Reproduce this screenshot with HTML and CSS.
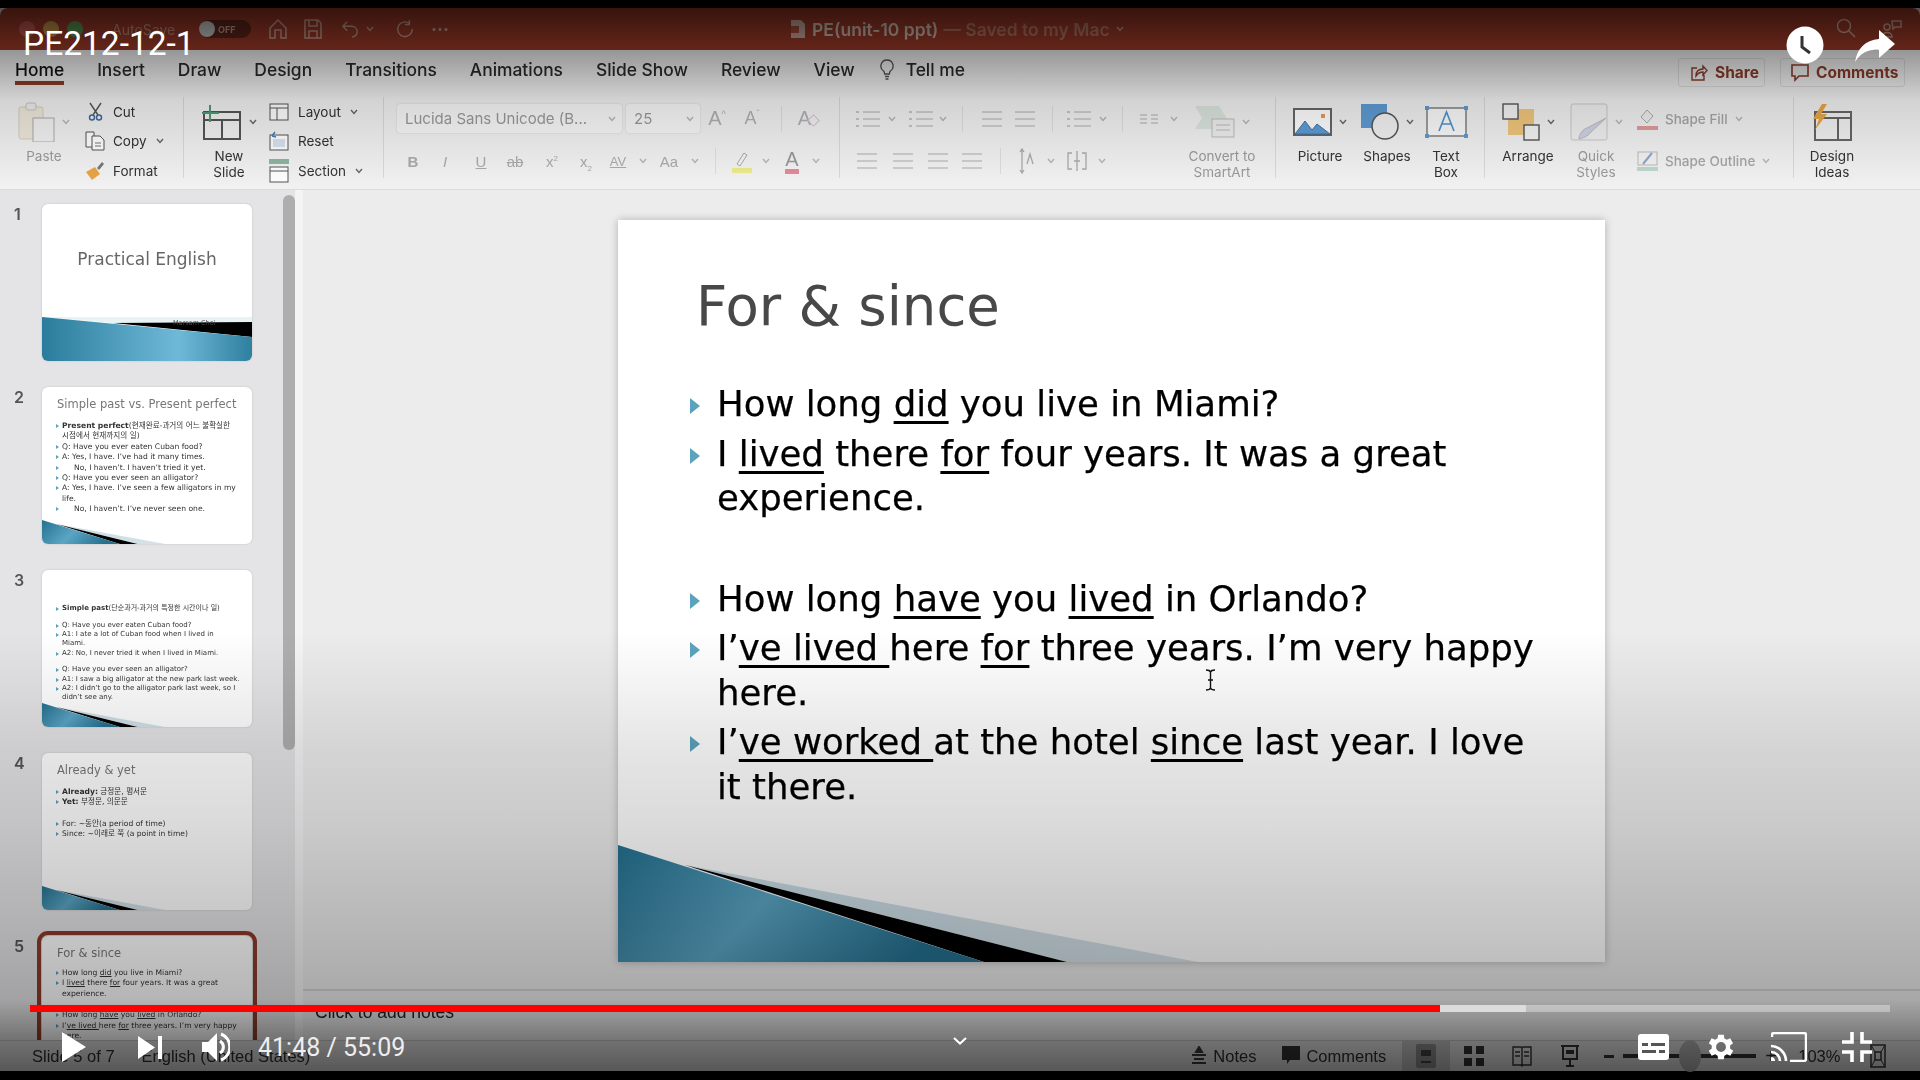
FILE: index.html
```html
<!DOCTYPE html>
<html lang="en">
<head>
<meta charset="UTF-8">
<title>PE212-12-1</title>
<link rel="stylesheet" href="styles.css">
</head>
<body>

<svg class="defs" width="0" height="0">
  <defs>
    <linearGradient id="blue" x1="0" y1="0" x2="1" y2="0.3">
      <stop offset="0" stop-color="#24708f"/>
      <stop offset="0.5" stop-color="#5ba5c4"/>
      <stop offset="1" stop-color="#24708f"/>
    </linearGradient>
    <linearGradient id="blueWide" x1="0" y1="0" x2="1" y2="0">
      <stop offset="0" stop-color="#2b7c9c"/>
      <stop offset="0.65" stop-color="#6fb9d8"/>
      <stop offset="1" stop-color="#2f7f9f"/>
    </linearGradient>
    <linearGradient id="fade" x1="0" y1="0" x2="1" y2="0">
      <stop offset="0" stop-color="#c6dbe6"/>
      <stop offset="1" stop-color="#d6e2e8"/>
    </linearGradient>
    <symbol id="wave" viewBox="0 0 987 117" preserveAspectRatio="none">
      <polygon points="67,20 580,117 449,117" fill="url(#fade)"/>
      <polygon points="67,20 449,117 366,117" fill="#000"/>
      <polygon points="0,0 366,117 0,117" fill="url(#blue)"/>
    </symbol>
    <symbol id="chev" viewBox="0 0 8 6">
      <path d="M1 1l3 3.4L7 1" fill="none" stroke="currentColor" stroke-width="1.4"/>
    </symbol>
    <symbol id="lines" viewBox="0 0 20 18">
      <path d="M0 2h20M0 9h20M0 16h20" fill="none" stroke="currentColor" stroke-width="1.6"/>
    </symbol>
    <symbol id="listing" viewBox="0 0 24 18">
      <path d="M7 2h17M7 9h17M7 16h17" fill="none" stroke="currentColor" stroke-width="1.6"/>
      <path d="M0 1h3v2H0zM0 8h3v2H0zM0 15h3v2H0z" fill="currentColor"/>
    </symbol>
  </defs>
</svg>

<div class="app">
  <header class="titlebar">
    <span class="light light-red"></span>
    <span class="light light-yellow"></span>
    <span class="light light-green"></span>
    <span class="autosave">AutoSave</span>
    <span class="toggle"><i></i><b>OFF</b></span>
    <svg class="tb-icon tb-home" viewBox="0 0 20 22"><path d="M2 10l8-8 8 8v10h-5v-8H7v8H2z"/></svg>
    <svg class="tb-icon tb-save" viewBox="0 0 20 22"><path d="M2 2h13l3 3v15H2zM6 2v6h8V2M6 20v-7h8v7"/></svg>
    <svg class="tb-icon tb-undo" viewBox="0 0 22 22"><path d="M3 8h10a6 6 0 0 1 0 12M3 8l5-5M3 8l5 5"/></svg>
    <svg class="tb-chev"><use href="#chev"/></svg>
    <svg class="tb-icon tb-redo" viewBox="0 0 22 22"><path d="M17 5a8 8 0 1 0 3 6M17 1v5h-5"/></svg>
    <span class="tb-dots">···</span>
    <svg class="tb-doc" viewBox="0 0 14 18"><path d="M0 0h10l4 4v14H0z" fill="#d8b4a6"/><rect x="0" y="6" width="8" height="7" fill="#b5523a"/></svg>
    <span class="doc-name">PE(unit-10 ppt)</span>
    <span class="doc-saved">— Saved to my Mac</span>
    <svg class="tb-chev"><use href="#chev"/></svg>
    <svg class="tb-icon tb-search" viewBox="0 0 20 20"><circle cx="8" cy="8" r="6.5"/><path d="M13 13l6 6"/></svg>
    <svg class="tb-icon tb-people" viewBox="0 0 24 20"><circle cx="7" cy="8" r="3"/><path d="M2 18c0-6 10-6 10 0zM12 2h9v6h-6l-2 2z"/></svg>
  </header>

  <nav class="tabs">
    <span class="tab active">Home</span>
    <span class="tab">Insert</span>
    <span class="tab">Draw</span>
    <span class="tab">Design</span>
    <span class="tab">Transitions</span>
    <span class="tab">Animations</span>
    <span class="tab">Slide Show</span>
    <span class="tab">Review</span>
    <span class="tab">View</span>
    <svg class="bulb" viewBox="0 0 14 22"><path d="M7 1a6 6 0 0 0-3.400 11c.8.7.9 1.500 1 3h4.800c.1-1.500.2-2.300 1-3A6 6 0 0 0 7 1zM5 17.500h4M5.500 20h3" fill="none" stroke="#555" stroke-width="1.300"/></svg>
    <span class="tab tell">Tell me</span>
    <span class="top-btn share">
      <svg viewBox="0 0 18 18"><path d="M7 4H2v12h12v-5M6 12c0-5 3-7 7-7V2l4 4.500L13 11V8c-3 0-5 1-7 4z" fill="none" stroke="#8c3b2a" stroke-width="1.400"/></svg>
      Share
    </span>
    <span class="top-btn comments">
      <svg viewBox="0 0 18 18"><path d="M1 1h16v11H8l-4 4v-4H1z" fill="none" stroke="#8c3b2a" stroke-width="1.600"/></svg>
      Comments
    </span>
  </nav>

  <section class="ribbon">
    <div class="group g-clip">
      <div class="big paste muted">
        <div class="big-icon">
          <svg class="ic-paste" viewBox="0 0 37 40"><rect x="1" y="5" width="24" height="32" rx="2" fill="#efe9dc" stroke="#d7cfbd"/><rect x="8" y="1" width="10" height="7" rx="2" fill="#eee" stroke="#c9c4b8"/><rect x="15" y="16" width="21" height="24" fill="#f2f2f2" stroke="#aaa"/></svg>
          <svg class="chev"><use href="#chev"/></svg>
        </div>
        <span>Paste</span>
      </div>
      <div class="tools">
        <div class="tool">
          <span class="tool-ic"><svg width="15" height="19" viewBox="0 0 15 19"><path d="M2 1l8 12M13 1L5 13" fill="none" stroke="#555" stroke-width="1.400"/><circle cx="4" cy="15.500" r="2.500" fill="none" stroke="#3e6d9c" stroke-width="1.500"/><circle cx="11" cy="15.500" r="2.500" fill="none" stroke="#3e6d9c" stroke-width="1.500"/></svg></span>
          Cut
        </div>
        <div class="tool">
          <span class="tool-ic"><svg width="21" height="20" viewBox="0 0 21 20"><path d="M1 1h8v15H1z" fill="#fff" stroke="#555"/><path d="M7 5h8l4 4v10H7z" fill="#fff" stroke="#555"/><path d="M10 12h6M10 15h6" stroke="#777"/></svg></span>
          Copy <svg class="chev chev-gap"><use href="#chev"/></svg>
        </div>
        <div class="tool">
          <span class="tool-ic"><svg width="20" height="20" viewBox="0 0 20 20"><path d="M1 11l9-5 5 7-8 6z" fill="#eaa545"/><path d="M12 7l5-6 2 2-5 6z" fill="#777"/></svg></span>
          Format
        </div>
      </div>
    </div>

    <div class="group g-slides">
      <div class="big new-slide">
        <div class="big-icon">
          <svg class="ic-new" viewBox="0 0 40 36"><rect x="2" y="8" width="36" height="27" fill="#f3f3f3" stroke="#555" stroke-width="2"/><path d="M2 16h36M20 16v19" stroke="#555" stroke-width="2"/><path d="M8 1v17M0 9h17" stroke="#4f9a78" stroke-width="2"/></svg>
          <svg class="chev"><use href="#chev"/></svg>
        </div>
        <span>New</span>
        <span>Slide</span>
      </div>
      <div class="tools tools-wide">
        <div class="tool">
          <span class="tool-ic"><svg width="20" height="18" viewBox="0 0 20 18"><rect x="1" y="1" width="18" height="16" fill="#fff" stroke="#555"/><path d="M1 5h18M8 5v12" stroke="#555"/></svg></span>
          Layout <svg class="chev chev-gap"><use href="#chev"/></svg>
        </div>
        <div class="tool">
          <span class="tool-ic"><svg width="20" height="20" viewBox="0 0 20 20"><rect x="1" y="4" width="18" height="15" fill="#fff" stroke="#555"/><path d="M4 8h12v8H4z" fill="#d7e3ee"/><path d="M3 5l3-4M3 5l4 1" stroke="#3e7fb8" stroke-width="1.500" fill="none"/></svg></span>
          Reset
        </div>
        <div class="tool">
          <span class="tool-ic"><svg width="20" height="24" viewBox="0 0 20 24"><rect x="0" y="0" width="20" height="5" fill="#8fb59f"/><rect x="1" y="8" width="18" height="15" fill="#fff" stroke="#555"/><path d="M1 12h18" stroke="#555"/></svg></span>
          Section <svg class="chev chev-gap"><use href="#chev"/></svg>
        </div>
      </div>
    </div>

    <div class="group g-font">
      <div class="font-row1">
        <span class="field field-name">Lucida Sans Unicode (B... <svg class="chev"><use href="#chev"/></svg></span>
        <span class="field field-size">25 <svg class="chev"><use href="#chev"/></svg></span>
        <div class="cells cells-font1 muted-ic">
          <span class="glyph">A<sup>^</sup></span>
          <span class="glyph glyph-sm">A<sup>ˇ</sup></span>
          <span class="vsep"></span>
          <span class="glyph">A<i class="eraser"></i></span>
        </div>
      </div>
      <div class="cells cells-font2 muted-ic">
        <span class="fmt bold">B</span>
        <span class="fmt ital">I</span>
        <span class="fmt under">U</span>
        <span class="fmt strike">ab</span>
        <span class="fmt">x<sup>2</sup></span>
        <span class="fmt">x<sub>2</sub></span>
        <span class="fmt fmt-sm">AV</span>
        <svg class="chev"><use href="#chev"/></svg>
        <span class="fmt">Aa</span>
        <svg class="chev"><use href="#chev"/></svg>
        <span class="vsep"></span>
        <svg width="20" height="24" viewBox="0 0 20 24"><path d="M5 15l7-11 3 2-7 11z" fill="none" stroke="#aaa"/><rect x="0" y="19" width="20" height="5" fill="#ecec8c"/></svg>
        <svg class="chev"><use href="#chev"/></svg>
        <span class="fmt font-a">A</span>
        <svg class="chev"><use href="#chev"/></svg>
      </div>
    </div>

    <div class="group g-para">
      <div class="para-rows">
        <div class="cells cells-para1 muted-ic">
          <span></span>
          <svg width="24" height="18"><use href="#listing"/></svg>
          <svg class="chev"><use href="#chev"/></svg>
          <svg width="24" height="18"><use href="#listing"/></svg>
          <svg class="chev"><use href="#chev"/></svg>
          <span class="vsep"></span>
          <svg width="20" height="18"><use href="#lines"/></svg>
          <svg width="20" height="18"><use href="#lines"/></svg>
          <span class="vsep"></span>
          <svg width="24" height="18"><use href="#listing"/></svg>
          <svg class="chev"><use href="#chev"/></svg>
          <span class="vsep"></span>
          <svg class="ic-cols" viewBox="0 0 18 12"><path d="M0 2h7M0 6h7M0 10h7M11 2h7M11 6h7M11 10h7" stroke="#c4c4c4" stroke-width="1.400"/></svg>
          <svg class="chev"><use href="#chev"/></svg>
        </div>
        <div class="cells cells-para2 muted-ic">
          <svg width="20" height="18"><use href="#lines"/></svg>
          <svg width="20" height="18"><use href="#lines"/></svg>
          <svg width="20" height="18"><use href="#lines"/></svg>
          <svg width="20" height="18"><use href="#lines"/></svg>
          <span class="vsep"></span>
          <svg width="16" height="26" viewBox="0 0 16 26"><path d="M3 1v24M1 4l2-3 2 3M1 22l2 3 2-3M8 16l3-10 3 10" fill="none" stroke="#aaa" stroke-width="1.300"/></svg>
          <svg class="chev"><use href="#chev"/></svg>
          <svg width="20" height="22" viewBox="0 0 20 22"><path d="M5 3H1v16h4M15 3h4v16h-4M10 1v20M7 11h6" fill="none" stroke="#aaa" stroke-width="1.300"/></svg>
          <svg class="chev"><use href="#chev"/></svg>
        </div>
      </div>
      <div class="big smartart muted">
        <div class="big-icon">
          <svg class="ic-smart" viewBox="0 0 40 32"><path d="M0 0h24l9 14-9 9H0l7-11z" fill="#dbe5dd"/><rect x="17" y="13" width="22" height="18" fill="#eee" stroke="#bbb"/><path d="M21 19h14M21 24h14" stroke="#bbb"/></svg>
          <svg class="chev"><use href="#chev"/></svg>
        </div>
        <span>Convert to</span>
        <span>SmartArt</span>
      </div>
    </div>

    <div class="group g-insert">
      <div class="big w-picture">
        <div class="big-icon">
          <svg class="ic-pic" viewBox="0 0 39 28"><rect x="1" y="1" width="37" height="26" fill="#fff" stroke="#666" stroke-width="2"/><path d="M2 26l10-13 7 9 5-6 13 10z" fill="#5f9bd3" stroke="#3c76ab"/><rect x="28" y="6" width="4" height="4" fill="#e79a5a"/></svg>
          <svg class="chev"><use href="#chev"/></svg>
        </div>
        <span>Picture</span>
      </div>
      <div class="big w-shapes">
        <div class="big-icon">
          <svg class="ic-shapes" viewBox="0 0 38 36"><rect x="0" y="0" width="26" height="24" fill="#5f9bd3"/><circle cx="24" cy="22" r="13" fill="#f2f2f2" stroke="#555" stroke-width="1.500"/></svg>
          <svg class="chev"><use href="#chev"/></svg>
        </div>
        <span>Shapes</span>
      </div>
      <div class="big w-textbox">
        <div class="big-icon">
          <svg class="ic-box" viewBox="0 0 43 32"><rect x="2" y="2" width="39" height="28" fill="#fafafa" stroke="#777" stroke-width="1.400"/><path d="M14 25l7.500-19L29 25M17 18h9" fill="none" stroke="#4e92cf" stroke-width="1.600"/><g fill="#5f9bd3"><rect width="4" height="4"/><rect x="39" width="4" height="4"/><rect y="28" width="4" height="4"/><rect x="39" y="28" width="4" height="4"/></g></svg>
        </div>
        <span>Text</span>
        <span>Box</span>
      </div>
    </div>

    <div class="group g-draw">
      <div class="big w-arrange">
        <div class="big-icon">
          <svg class="ic-arr" viewBox="0 0 38 38"><rect x="6" y="6" width="26" height="26" fill="#f0c77c"/><rect x="1" y="1" width="15" height="15" fill="#f4f4f4" stroke="#555" stroke-width="1.400"/><rect x="22" y="22" width="15" height="15" fill="#f4f4f4" stroke="#555" stroke-width="1.400"/></svg>
          <svg class="chev"><use href="#chev"/></svg>
        </div>
        <span>Arrange</span>
      </div>
      <div class="big w-quick muted">
        <div class="big-icon">
          <svg class="ic-arr" viewBox="0 0 38 38"><rect x="1" y="1" width="36" height="36" rx="2" fill="#f0f0f0" stroke="#c9c9c9"/><path d="M36 15L20 30c-2 3-6 5-11 6 0-5 4-10 8-11z" fill="#cfd3e6" stroke="#bbb"/></svg>
          <svg class="chev"><use href="#chev"/></svg>
        </div>
        <span>Quick</span>
        <span>Styles</span>
      </div>
      <div class="shape-tools">
        <div class="shape-tool">
          <svg width="21" height="22" viewBox="0 0 21 22"><path d="M4 9l6-7 6 6-6 7z" fill="#eee" stroke="#aaa"/><rect y="18" width="21" height="4" fill="#e39a9a"/></svg>
          <span>Shape Fill</span>
          <svg class="chev"><use href="#chev"/></svg>
        </div>
        <div class="shape-tool">
          <svg width="21" height="20" viewBox="0 0 21 20"><rect x="1" y="1" width="19" height="13" fill="#f2f2f2" stroke="#bbb"/><path d="M6 13l9-11" stroke="#8fa5c9" stroke-width="2"/><rect y="16" width="21" height="4" fill="#bcd8d0"/></svg>
          <span>Shape Outline</span>
          <svg class="chev"><use href="#chev"/></svg>
        </div>
      </div>
    </div>

    <div class="group g-design">
      <div class="big w-design">
        <div class="big-icon">
          <svg class="ic-design" viewBox="0 0 40 37"><rect x="3" y="8" width="36" height="28" fill="#f2f2f2" stroke="#666" stroke-width="2"/><path d="M3 14h36M26 14v22" stroke="#666" stroke-width="2"/><path d="M10 0L1 15h6L3 26l12-16H9l6-10z" fill="#eaa545"/></svg>
        </div>
        <span>Design</span>
        <span>Ideas</span>
      </div>
    </div>
  </section>

  <div class="workspace">
    <aside class="sidebar">
      <div class="thumb-row">
        <span class="num">1</span>
        <div class="thumb thumb-first">
          <h4 class="first-title">Practical English</h4>
          <span class="first-name">Marsam Choi</span>
          <svg class="first-wave" viewBox="0 0 210 44" preserveAspectRatio="none">
            <polygon points="0,0 71,6 210,5 210,-3 0,-3" fill="#e9f2f5"/>
            <polygon points="71,6 210,5 210,20" fill="#000"/>
            <polygon points="0,0 210,20 210,44 0,44" fill="url(#blueWide)"/>
          </svg>
        </div>
      </div>
      <div class="thumb-row">
        <span class="num">2</span>
        <div class="thumb">
          <h4 class="t-title t-title-sm">Simple past vs. Present perfect</h4>
          <ul class="t-list">
            <li><b>Present perfect</b>(현재완료-과거의 어느 불확실한<br>시점에서 현재까지의 일)</li>
            <li>Q: Have you ever eaten Cuban food?</li>
            <li>A: Yes, I have. I’ve had it many times.</li>
            <li class="indent">No, I haven’t. I haven’t tried it yet.</li>
            <li>Q: Have you ever seen an alligator?</li>
            <li>A: Yes, I have. I’ve seen a few alligators in my life.</li>
            <li class="indent">No, I haven’t. I’ve never seen one.</li>
          </ul>
          <svg class="t-wave"><use href="#wave"/></svg>
        </div>
      </div>
      <div class="thumb-row">
        <span class="num">3</span>
        <div class="thumb">
          <ul class="t-list t-list-3">
            <li class="gap-after"><b>Simple past</b>(단순과거-과거의 특정한 시간이나 일)</li>
            <li>Q: Have you ever eaten Cuban food?</li>
            <li>A1: I ate a lot of Cuban food when I lived in<br>Miami.</li>
            <li class="gap-after">A2: No, I never tried it when I lived in Miami.</li>
            <li>Q: Have you ever seen an alligator?</li>
            <li>A1: I saw a big alligator at the new park last week.</li>
            <li>A2: I didn’t go to the alligator park last week, so I didn’t see any.</li>
          </ul>
          <svg class="t-wave"><use href="#wave"/></svg>
        </div>
      </div>
      <div class="thumb-row">
        <span class="num">4</span>
        <div class="thumb">
          <h4 class="t-title">Already &amp; yet</h4>
          <ul class="t-list">
            <li><b>Already:</b> 긍정문, 평서문</li>
            <li class="gap-after-lg"><b>Yet:</b> 부정문, 의문문</li>
            <li>For: ~동안(a period of time)</li>
            <li>Since: ~이래로 쭉 (a point in time)</li>
          </ul>
          <svg class="t-wave"><use href="#wave"/></svg>
        </div>
      </div>
      <div class="thumb-row">
        <span class="num">5</span>
        <div class="thumb selected">
          <h4 class="t-title">For &amp; since</h4>
          <ul class="t-list">
            <li>How long <u>did</u> you live in Miami?</li>
            <li class="gap-after-lg">I <u>lived</u> there <u>for</u> four years. It was a great experience.</li>
            <li>How long <u>have</u> you <u>lived</u> in Orlando?</li>
            <li>I’<u>ve lived </u>here <u>for</u> three years. I’m very happy here.</li>
          </ul>
        </div>
      </div>
      <div class="scrollbar"></div>
    </aside>
    <div class="gutter"></div>
    <main class="main">
      <div class="canvas">
        <article class="slide">
          <h1 class="slide-title">For &amp; since</h1>
          <ul class="slide-list">
            <li>How long <u>did</u> you live in Miami?</li>
            <li>I <u>lived</u> there <u>for</u> four years. It was a great experience.</li>
            <li class="blank"></li>
            <li>How long <u>have</u> you <u>lived</u> in Orlando?</li>
            <li>I’<u>ve lived </u>here <u>for</u> three years. I’m very happy here.</li>
            <li>I’<u>ve worked </u>at the hotel <u>since</u> last year. I love it there.</li>
          </ul>
          <svg class="slide-wave"><use href="#wave"/></svg>
        </article>
      </div>
      <div class="notes">Click to add notes</div>
    </main>
  </div>

  <footer class="status">
    <span class="st-slide">Slide 5 of 7</span>
    <span class="st-lang">English (United States)</span>
    <span class="st-item st-notes">
      <svg width="16" height="20" viewBox="0 0 16 20"><path d="M8 1l3 5H5zM1 9h14M3 13h10M1 17h14" stroke="#3a3a3a" stroke-width="2" fill="#3a3a3a"/></svg>
      Notes
    </span>
    <span class="st-item st-comments">
      <svg width="18" height="20" viewBox="0 0 18 20"><path d="M0 0h18v14H8l-3 4v-4H0z" fill="#333"/></svg>
      Comments
    </span>
    <span class="view-btn view-on"><svg width="20" height="24" viewBox="0 0 20 24"><rect width="20" height="24" rx="2" fill="#8e8e8e"/><rect x="5" y="6" width="10" height="6" fill="#444"/><rect x="5" y="17" width="10" height="2" fill="#444"/></svg></span>
    <span class="view-btn"><svg width="20" height="20" viewBox="0 0 20 20" fill="#333"><rect width="8" height="8"/><rect x="12" width="8" height="8"/><rect y="12" width="8" height="8"/><rect x="12" y="12" width="8" height="8"/></svg></span>
    <span class="view-btn"><svg width="20" height="22" viewBox="0 0 20 22"><path d="M1 2h8l1 1 1-1h8v18h-8l-1 1-1-1H1zM10 3v17M3 7h5M3 11h5M12 7h5M12 11h5" fill="none" stroke="#333" stroke-width="1.400"/></svg></span>
    <span class="view-btn"><svg width="18" height="22" viewBox="0 0 18 22"><path d="M0 1h18M2 1v13h14V1M9 14v6M5 21h8" fill="none" stroke="#333" stroke-width="2"/><rect x="5" y="5" width="8" height="4" fill="#333"/></svg></span>
    <span class="zoom-minus"></span>
    <span class="zoom-track"><i></i></span>
    <span class="zoom-plus">+</span>
    <span class="zoom-pct">103%</span>
    <svg class="fit" width="16" height="24" viewBox="0 0 16 24"><path d="M1 1h14v22H1zM5 8h6v8H5z" fill="none" stroke="#333" stroke-width="1.500"/><path d="M1 1l4 7M15 1l-4 7M1 23l4-7M15 23l-4-7" stroke="#333"/></svg>
  </footer>
</div>

<svg class="cursor" width="11" height="22" viewBox="0 0 11 22"><path d="M1 1c2 0 4 .5 4.500 2v16c-.5 1.500-2.500 2-4.500 2M10 1C8 1 6 1.500 5.500 3v16c.5 1.500 2.500 2 4.500 2M3 11h5" fill="none" stroke="#111" stroke-width="1.400"/></svg>

<div class="shade shade-top"></div>
<div class="shade shade-bottom"></div>

<div class="yt-top">
  <span class="yt-title">PE212-12-1</span>
  <span class="yt-clock">
    <svg viewBox="0 0 38 38"><circle cx="19" cy="19" r="18.500" fill="#fff"/><path d="M16 10v11l8 6" fill="none" stroke="#333" stroke-width="3"/></svg>
  </span>
  <svg class="yt-share" viewBox="0 0 40 32"><path d="M24 0l16 14-16 14v-8C13 19 6 23 0 32c2-13 10-22 24-23z" fill="#fff"/></svg>
</div>

<div class="yt-bottom">
  <div class="yt-progress">
    <span class="bar-played"></span>
    <span class="bar-buffer"></span>
    <span class="bar-rest"></span>
  </div>
  <div class="yt-controls">
    <svg class="yt-play" viewBox="0 0 24 30"><path d="M0 0l24 15L0 30z" fill="#fff"/></svg>
    <svg class="yt-next" viewBox="0 0 24 23"><path d="M0 0l17 11.500L0 23zM20 0h4v23h-4z" fill="#fff"/></svg>
    <svg class="yt-vol" viewBox="0 0 28 30"><path d="M0 10h6l9-9v28l-9-9H0z" fill="#fff"/><path d="M18 9a7 7 0 0 1 0 12" fill="none" stroke="#fff" stroke-width="3"/><path d="M19 2a14 14 0 0 1 0 26" fill="none" stroke="#fff" stroke-width="3"/></svg>
    <span class="yt-time">41:48 / 55:09</span>
    <svg class="yt-chev" viewBox="0 0 14 8"><path d="M1 1l6 5.500L13 1" fill="none" stroke="#fff" stroke-width="2.200"/></svg>
    <svg class="yt-cc" viewBox="0 0 31 26"><rect width="31" height="26" rx="3" fill="#fff"/><path d="M4 9h6v3H4zM13 9h14v3H13zM4 16h14v3H4zM21 16h6v3h-6z" fill="#555"/></svg>
    <svg class="yt-gear" viewBox="0 0 24 24"><path d="M19.400 13a7.500 7.500 0 0 0 0-2l2.100-1.600-2-3.500-2.500 1a7.500 7.500 0 0 0-1.700-1L15 3.300h-4l-.4 2.600a7.500 7.500 0 0 0-1.700 1l-2.500-1-2 3.500L6.500 11a7.500 7.500 0 0 0 0 2l-2.100 1.600 2 3.500 2.500-1a7.500 7.500 0 0 0 1.700 1l.4 2.600h4l.4-2.600a7.500 7.500 0 0 0 1.700-1l2.500 1 2-3.500zM13 15.500a3.500 3.500 0 1 1 0-7 3.500 3.500 0 0 1 0 7z" fill="#fff" fill-rule="evenodd" transform="translate(-1 0)"/></svg>
    <svg class="yt-cast" viewBox="0 0 36 30"><path d="M1 5V3a2 2 0 0 1 2-2h30a2 2 0 0 1 2 2v24a2 2 0 0 1-2 2H19" fill="none" stroke="#fff" stroke-width="2.400"/><path d="M0 14c8 0 15 7 15 15M0 20c5 0 9 4 9 9" fill="none" stroke="#fff" stroke-width="2.600"/><path d="M0 25a4 4 0 0 1 4 4H0z" fill="#fff"/></svg>
    <svg class="yt-exit" viewBox="0 0 30 30"><path d="M10 0v10H0M20 0v10h10M10 30V20H0M20 30V20h10" fill="none" stroke="#fff" stroke-width="3.600"/></svg>
  </div>
</div>

</body>
</html>
```

FILE: styles.css
```css
* {
  box-sizing: border-box;
}
html, body {
  margin: 0;
  padding: 0;
  height: 100%;
}
body {
  background-color: #000;
  overflow: hidden;
  position: relative;
  padding-top: 8px;
  font-family: Inter, "Liberation Sans", sans-serif;
  color: #333;
}
.defs {
  position: absolute;
}
.app {
  height: 1063px;
  display: flex;
  flex-direction: column;
  background-color: #ececec;
  filter: blur(0.55px);
}

/* title bar */
.titlebar {
  height: 42px;
  flex: none;
  display: flex;
  align-items: center;
  background-color: #a33c29;
  border-radius: 8px 8px 0 0;
  color: #d9b5a8;
  padding-top: 0;
}
.light {
  width: 16px;
  height: 16px;
  border-radius: 50%;
  margin-right: 8px;
  background-color: #c65a50;
}
.light-red {
  margin-left: 19px;
}
.light-yellow {
  background-color: #c9984a;
}
.light-green {
  background-color: #5f9b52;
}
.autosave {
  margin-left: 21px;
  font-size: 14px;
  color: #c98f7e;
  width: 87px;
}
.toggle {
  width: 52px;
  height: 18px;
  border-radius: 9px;
  background-color: #64261a;
  display: flex;
  align-items: center;
  gap: 3px;
}
.toggle i {
  width: 16px;
  height: 16px;
  border-radius: 50%;
  background-color: #d6d6d6;
}
.toggle b {
  font-size: 9px;
  color: #c9a193;
}
.tb-icon {
  width: 20px;
  height: 22px;
  fill: none;
  stroke: #d3a799;
  stroke-width: 1.500;
}
.tb-home {
  margin-left: 17px;
}
.tb-save {
  margin-left: 15px;
}
.tb-undo {
  margin-left: 17px;
}
.tb-chev {
  width: 8px;
  height: 6px;
  margin-left: 6px;
  color: #c9a193;
}
.tb-redo {
  margin-left: 20px;
}
.tb-dots {
  margin-left: 17px;
  font-size: 18px;
  color: #d3a799;
  font-weight: 700;
}
.tb-doc {
  width: 14px;
  height: 18px;
  margin-left: 342px;
}
.doc-name {
  margin-left: 7px;
  font-size: 17.500px;
  font-weight: 600;
  color: #e0c8bc;
  white-space: pre;
}
.doc-saved {
  margin-left: 5px;
  font-size: 17.500px;
  font-weight: 600;
  color: #bf7a66;
}
.tb-search {
  width: 20px;
  height: 20px;
  margin-left: 712px;
  margin-top: -2px;
}
.tb-people {
  width: 24px;
  height: 20px;
  margin-left: 24px;
}

/* tabs */
.tabs {
  height: 40px;
  flex: none;
  display: flex;
  align-items: flex-start;
  gap: 33px;
  padding: 10px 15px 0;
  background-color: #f2f2f2;
  font-size: 17.400px;
  font-weight: 500;
  color: #2a2a2a;
}
.tab {
  line-height: 20px;
  padding-bottom: 4px;
  white-space: nowrap;
}
.tab.active {
  border-bottom: 4px solid #8c3b2a;
  padding-bottom: 1px;
  color: #111;
}
.bulb {
  width: 14px;
  height: 22px;
  margin-left: -8px;
  margin-top: -1px;
}
.tell {
  margin-left: -21px;
}
.top-btn {
  height: 29px;
  margin-top: -2px;
  display: flex;
  align-items: center;
  gap: 7px;
  border: 1px solid #dcdcdc;
  border-radius: 3px;
  color: #8c3b2a;
  font-size: 15.500px;
  font-weight: 700;
}
.top-btn svg {
  width: 18px;
  height: 18px;
}
.share {
  width: 87px;
  margin-left: auto;
  padding-left: 11px;
}
.comments {
  width: 125px;
  margin-left: -18px;
  padding-left: 10px;
}

/* ribbon */
.ribbon {
  height: 100px;
  flex: none;
  display: flex;
  padding: 7px 0 11px;
  background-color: #f2f2f2;
  border-bottom: 1px solid #dcdcdc;
  font-size: 13.500px;
  color: #333;
}
.group {
  display: flex;
  border-right: 1px solid #dadada;
  flex: none;
}
.g-clip {
  width: 184px;
}
.g-slides {
  width: 200px;
  padding-left: 6px;
}
.g-font {
  width: 456px;
  flex-direction: column;
  gap: 13px;
  padding: 7px 0 0 13px;
}
.g-para {
  width: 436px;
}
.g-insert {
  width: 209px;
}
.g-draw {
  width: 309px;
}
.g-design {
  border-right: 0;
  width: 76px;
}
.big {
  display: flex;
  flex-direction: column;
  align-items: center;
  flex: none;
  line-height: 16px;
  white-space: nowrap;
}
.big-icon {
  height: 50px;
  flex: none;
  margin-bottom: 1px;
  display: flex;
  align-items: center;
  gap: 7px;
}
.big span {
  flex: none;
}
.muted {
  color: #9a9a9a;
}
.chev {
  width: 8px;
  height: 6px;
  flex: none;
  color: #666;
}
.muted .chev, .muted-ic .chev, .field .chev, .shape-tool .chev {
  color: #b5b5b5;
}
.chev-gap {
  margin-left: 9px;
}
.paste {
  width: 88px;
  margin-right: -4px;
}
.ic-paste {
  width: 37px;
  height: 40px;
}
.new-slide {
  width: 78px;
}
.ic-new {
  width: 40px;
  height: 36px;
}
.tools {
  display: flex;
  flex-direction: column;
}
.tool {
  height: 29.500px;
  flex: none;
  display: flex;
  align-items: center;
  white-space: nowrap;
}
.tool-ic {
  width: 22px;
  margin-right: 7px;
  display: flex;
  justify-content: center;
}
.tools-wide .tool-ic {
  margin-right: 8px;
}
.font-row1 {
  display: flex;
  gap: 4px;
  height: 29px;
}
.field {
  height: 29px;
  display: flex;
  align-items: center;
  justify-content: space-between;
  padding: 0 6px 0 8px;
  background-color: #f8f8f8;
  border-radius: 3px;
  box-shadow: 0 0 2px #ccc;
  font-size: 15px;
  color: #999;
  white-space: nowrap;
}
.field-name {
  width: 225px;
}
.field-size {
  width: 74px;
}
.cells {
  display: grid;
  align-items: center;
  justify-items: center;
  color: #aaa;
}
.cells-font1 {
  height: 29px;
  margin-left: -4px;
  grid-template-columns: 34px 36px 22px 32px;
}
.cells-font2 {
  height: 30px;
  grid-template-columns: 32px 32px 40px 28px 46px 22px 42px 8px 44px 8px 32px 22px 26px 26px 22px;
}
.vsep {
  width: 1px;
  height: 26px;
  background-color: #dedede;
}
.glyph {
  font-size: 20px;
  font-family: "Liberation Sans", sans-serif;
  color: #b0b0b0;
  position: relative;
}
.glyph-sm {
  font-size: 18px;
}
.glyph sup {
  font-size: 9px;
  vertical-align: 8px;
  line-height: 0;
}
.eraser {
  display: inline-block;
  width: 9px;
  height: 9px;
  border: 1px solid #d8c2d8;
  transform: rotate(45deg);
  margin-left: -2px;
}
.fmt {
  font-size: 15px;
  color: #aaa;
  font-family: "Liberation Sans", sans-serif;
}
.fmt-sm {
  font-size: 13px;
  text-decoration: underline;
}
.fmt sup, .fmt sub {
  font-size: 8px;
  line-height: 0;
}
.bold {
  font-weight: 700;
}
.ital {
  font-style: italic;
}
.under {
  text-decoration: underline;
}
.strike {
  text-decoration: line-through;
}
.font-a {
  font-size: 20px;
  color: #999;
  border-bottom: 5px solid #e58a98;
  line-height: 20px;
}
.para-rows {
  width: 344px;
  display: flex;
  flex-direction: column;
  gap: 13px;
  padding-top: 7px;
}
.cells-para1 {
  height: 29px;
  grid-template-columns: 16px 24px 24px 34px 10px 28px 32px 34px 20px 34px 14px 24px 30px 20px;
}
.cells-para1 svg, .cells-para2 svg, .cells-font2 svg {
  color: #c4c4c4;
}
.cells-para2 {
  height: 30px;
  grid-template-columns: 54px 18px 52px 16px 40px 14px 34px 18px 32px;
}
.ic-cols {
  width: 18px;
  height: 12px;
}
.smartart {
  width: 76px;
}
.ic-smart {
  width: 40px;
  height: 32px;
}
.w-picture {
  width: 88px;
}
.ic-pic {
  width: 39px;
  height: 28px;
}
.w-shapes {
  width: 46px;
}
.ic-shapes {
  width: 38px;
  height: 36px;
}
.w-textbox {
  width: 72px;
}
.ic-box {
  width: 43px;
  height: 32px;
}
.w-arrange {
  width: 86px;
}
.ic-arr {
  width: 38px;
  height: 38px;
}
.w-quick {
  width: 50px;
}
.shape-tools {
  margin-left: 16px;
  padding-top: 7px;
  display: flex;
  flex-direction: column;
  gap: 13px;
}
.shape-tool {
  height: 29px;
  display: flex;
  align-items: center;
  gap: 7px;
  white-space: nowrap;
  color: #a5a5a5;
  font-weight: 500;
}
.w-design {
  width: 76px;
}
.ic-design {
  width: 40px;
  height: 37px;
}

/* slide sorter */
.workspace {
  height: 850px;
  flex: none;
  display: flex;
}
.sidebar {
  width: 295px;
  flex: none;
  position: relative;
  padding-top: 14px;
  overflow: hidden;
  background-color: #e4e4e6;
}
.thumb-row {
  height: 183px;
  display: flex;
}
.num {
  width: 42px;
  padding: 0 0 0 14px;
  font-size: 16px;
  font-weight: 600;
  color: #555;
}
.thumb {
  width: 210px;
  height: 157px;
  position: relative;
  display: flex;
  flex-direction: column;
  background-color: #fff;
  border-radius: 6px;
  box-shadow: 0 0 2px #bbb;
  overflow: hidden;
  font-family: "DejaVu Sans", "Noto Sans CJK KR", sans-serif;
}
.thumb.selected {
  overflow: visible;
  outline: 4px solid #8c3b2a;
  outline-offset: 1px;
}
.first-title {
  margin: 44px 0 0;
  font-size: 17px;
  font-weight: 400;
  text-align: center;
  color: #666;
  line-height: 22px;
}
.first-name {
  position: absolute;
  left: 131px;
  top: 115px;
  z-index: 1;
  font-size: 6.500px;
  line-height: 8px;
  color: #444;
}
.first-wave {
  width: 210px;
  height: 44px;
  margin-top: auto;
}
.t-title {
  margin: 9px 0 0 15px;
  font-size: 11.500px;
  line-height: 16px;
  font-weight: 400;
  color: #777;
  white-space: nowrap;
}
.t-list {
  list-style: none;
  margin: 9px 0 0;
  padding: 0 12px 0 20px;
  font-size: 7.600px;
  line-height: 10.400px;
  color: #333;
}
.selected .t-list {
  margin-top: 7px;
}
.t-list li {
  position: relative;
}
.t-list li::before {
  content: "";
  position: absolute;
  left: -6px;
  top: 3px;
  border-left: 3px solid #5ba3bd;
  border-top: 2px solid transparent;
  border-bottom: 2px solid transparent;
}
.t-list .indent {
  padding-left: 12px;
}
.t-list-3 {
  margin-top: 34px;
  font-size: 7px;
  line-height: 9.300px;
  padding-right: 8px;
}
.gap-after {
  margin-bottom: 7.500px;
}
.gap-after-lg {
  margin-bottom: 11px;
}
.t-wave {
  width: 210px;
  height: 24px;
  margin-top: auto;
  flex: none;
}
.scrollbar {
  position: absolute;
  left: 283px;
  top: 5px;
  width: 12px;
  height: 555px;
  border-radius: 6px;
  background-color: #aeaeae;
}
.gutter {
  width: 8px;
  flex: none;
  background-color: #f4f4f4;
}

/* main slide */
.main {
  flex: 1;
  display: flex;
  flex-direction: column;
}
.canvas {
  height: 799px;
  padding: 30px 0 0 315px;
}
.slide {
  width: 987px;
  height: 742px;
  display: flex;
  flex-direction: column;
  background-color: #fff;
  box-shadow: 0 0 8px rgba(0, 0, 0, 0.25);
  font-family: "DejaVu Sans", "Noto Sans CJK KR", sans-serif;
}
.slide-title {
  margin: 50px 0 0 78px;
  font-size: 54.500px;
  line-height: 72px;
  font-weight: 400;
  color: #484848;
}
.slide-list {
  list-style: none;
  width: 833px;
  margin: 40px 0 0 99px;
  padding: 0;
  font-size: 35.500px;
  line-height: 44.500px;
  color: #000;
  -webkit-text-stroke: 0.25px #000;
}
.slide-list li {
  position: relative;
  margin-bottom: 5px;
}
.slide-list li::before {
  content: "";
  position: absolute;
  left: -27px;
  top: 16px;
  border-left: 10px solid #5ba3bd;
  border-top: 8px solid transparent;
  border-bottom: 8px solid transparent;
}
.slide-list .blank {
  height: 46px;
}
.slide-list .blank::before {
  display: none;
}
.slide-list u {
  text-decoration-thickness: 2.500px;
  text-underline-offset: 5px;
}
.slide-wave {
  width: 987px;
  height: 117px;
  margin-top: auto;
  flex: none;
}
.notes {
  flex: 1;
  border-top: 2px solid #d4d4d4;
  padding: 11px 0 0 12px;
  font-family: "Liberation Sans", sans-serif;
  font-size: 17.500px;
  line-height: 20px;
  color: #222;
}

/* status bar */
.status {
  flex: 1;
  display: flex;
  align-items: center;
  background-color: #e4e4e4;
  border-top: 1px solid #c4c4c4;
  font-family: "Liberation Sans", sans-serif;
  font-size: 16.500px;
  color: #2e2e2e;
  white-space: nowrap;
}
.st-slide {
  margin-left: 32px;
}
.st-lang {
  margin-left: 27px;
}
.st-item {
  display: flex;
  align-items: center;
  gap: 6px;
}
.st-notes {
  margin-left: 881px;
}
.st-comments {
  margin-left: 26px;
}
.view-btn {
  width: 48px;
  height: 100%;
  display: flex;
  align-items: center;
  justify-content: center;
}
.view-on {
  margin-left: 16px;
  background-color: #c4c4c4;
}
.zoom-minus {
  width: 10px;
  height: 3px;
  margin-left: 10px;
  background-color: #333;
}
.zoom-track {
  width: 133px;
  height: 4px;
  margin-left: 9px;
  position: relative;
  background-color: #333;
}
.zoom-track i {
  position: absolute;
  left: 56px;
  top: -14px;
  width: 22px;
  height: 32px;
  border-radius: 50%;
  background-color: #b5b5b5;
}
.zoom-plus {
  margin-left: 9px;
  width: 22px;
  font-size: 20px;
}
.zoom-pct {
  margin-left: 11px;
  width: 50px;
}
.fit {
  margin-left: 22px;
}

/* video player chrome on top of the recording */
.shade {
  position: absolute;
  left: 0;
  width: 100%;
  pointer-events: none;
}
.shade-top {
  top: 0;
  height: 190px;
  background: linear-gradient(180deg, rgba(0, 0, 0, 0.72) 0, rgba(0, 0, 0, 0.38) 50px, rgba(0, 0, 0, 0.13) 100px, rgba(0, 0, 0, 0) 190px);
}
.shade-bottom {
  top: 630px;
  height: 450px;
  background: linear-gradient(180deg, rgba(0, 0, 0, 0) 0, rgba(0, 0, 0, 0.1) 120px, rgba(0, 0, 0, 0.14) 190px, rgba(0, 0, 0, 0.25) 330px, rgba(0, 0, 0, 0.29) 370px, rgba(0, 0, 0, 0.5) 410px, rgba(0, 0, 0, 0.62) 442px);
}
.cursor {
  position: absolute;
  left: 1205px;
  top: 669px;
}
.yt-top {
  position: absolute;
  left: 23px;
  right: 25px;
  top: 24px;
  display: flex;
  align-items: flex-start;
}
.yt-title {
  font-family: Roboto, sans-serif;
  font-size: 33.500px;
  line-height: 40px;
  color: #fff;
}
.yt-clock {
  margin-left: auto;
  margin-top: 2px;
  width: 38px;
  height: 38px;
}
.yt-share {
  width: 40px;
  height: 32px;
  margin: 6px 0 0 31px;
}
.yt-bottom {
  position: absolute;
  left: 0;
  right: 0;
  top: 1005px;
}
.yt-progress {
  display: flex;
  height: 7px;
  margin-left: 30px;
}
.bar-played {
  width: 1410px;
  background-color: #f00;
}
.bar-buffer {
  width: 86px;
  background-color: #dcdcdc;
}
.bar-rest {
  width: 364px;
  background-color: rgba(255, 255, 255, 0.35);
}
.yt-controls {
  display: flex;
  align-items: center;
  height: 30px;
  margin-top: 20px;
  padding: 0 48px 0 62px;
}
.yt-play {
  width: 24px;
  height: 30px;
}
.yt-next {
  width: 24px;
  height: 23px;
  margin-left: 52px;
}
.yt-vol {
  width: 28px;
  height: 30px;
  margin-left: 40px;
}
.yt-time {
  margin-left: 28px;
  font-family: Roboto, sans-serif;
  font-size: 25px;
  color: #eee;
  white-space: nowrap;
}
.yt-chev {
  width: 14px;
  height: 8px;
  margin: -12px 0 0 548px;
}
.yt-cc {
  width: 31px;
  height: 26px;
  margin-left: auto;
}
.yt-gear {
  width: 34px;
  height: 34px;
  margin-left: 35px;
}
.yt-cast {
  width: 36px;
  height: 30px;
  margin-left: 33px;
}
.yt-exit {
  width: 30px;
  height: 30px;
  margin-left: 35px;
}
```
